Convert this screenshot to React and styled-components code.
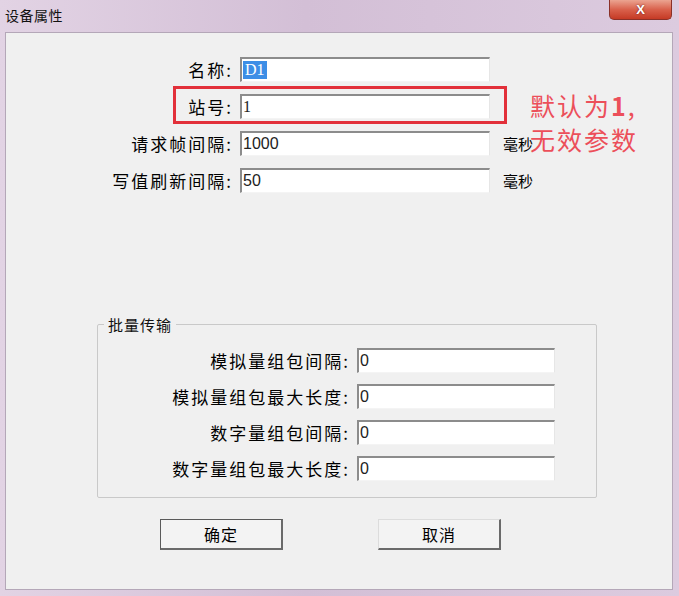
import React from "react";
import styled, { createGlobalStyle } from "styled-components";

const Global = createGlobalStyle`
  html, body { margin: 0; padding: 0; }
  body {
    width: 679px;
    height: 596px;
    overflow: hidden;
    font-family: "Noto Sans CJK SC", "Liberation Sans", sans-serif;
  }
`;

const Frame = styled.div`
  width: 679px;
  height: 596px;
  box-sizing: border-box;
  display: flex;
  flex-direction: column;
  background: linear-gradient(90deg, #e2d3e4 0%, #d3bfd6 45%, #dccbdf 100%);
  padding: 0 6px 6px 5px;
`;

const TitleBar = styled.div`
  height: 32px;
  display: flex;
  align-items: flex-start;
  justify-content: space-between;
  flex-shrink: 0;
`;

const Title = styled.div`
  font-size: 14px;
  color: #111;
  padding-top: 5px;
  letter-spacing: 0.5px;
`;

const CloseBtn = styled.div`
  width: 63px;
  height: 20px;
  margin-right: 1px;
  box-sizing: border-box;
  border: 1px solid #8a3128;
  border-top: none;
  border-radius: 0 0 5px 5px;
  background: linear-gradient(#eba491 0%, #d9614c 50%, #c53a25 100%);
  color: #fff;
  display: flex;
  align-items: center;
  justify-content: center;
  font: bold 13px "Liberation Sans", sans-serif;
  text-shadow: 0 0 2px #6a1a10;
`;

const Client = styled.div`
  flex: 1;
  position: relative;
  background: #f0f0f0;
  border: 1px solid #b4a7b8;
  box-sizing: border-box;
  padding-top: 24px;
  display: flex;
  flex-direction: column;
`;

const FormGrid = styled.div`
  display: grid;
  grid-template-columns: ${(p) => p.$label}px ${(p) => p.$input}px auto;
  column-gap: 7px;
  row-gap: ${(p) => p.$gap}px;
  align-items: center;
`;

const Label = styled.div`
  text-align: right;
  font-size: 17px;
  color: #000;
  letter-spacing: 2px;
  white-space: nowrap;
`;

const Input = styled.div`
  height: ${(p) => p.$h}px;
  box-sizing: border-box;
  background: #fff;
  border-top: 2px solid #8c8c8c;
  border-left: 2px solid #8c8c8c;
  border-right: 1px solid #e6e6e6;
  border-bottom: 1px solid #f4f4f4;
  display: flex;
  align-items: center;
  padding-left: 1px;
  font: 16px "Liberation Sans", sans-serif;
  color: #222;
`;

const Selected = styled.span`
  background: #3d8ee6;
  color: #fff;
  font-family: "Liberation Serif", serif;
  padding: 0 2px;
`;

const Serif = styled.span`
  font-family: "Liberation Serif", serif;
`;

const Unit = styled.div`
  font-size: 15px;
  color: #000;
  margin-left: 6px;
`;

const RedBox = styled.div`
  position: absolute;
  left: 167px;
  top: 53px;
  width: 334px;
  height: 38px;
  box-sizing: border-box;
  border: 3px solid #e2303a;
`;

const Note = styled.div`
  position: absolute;
  left: 524px;
  top: 55px;
  font-size: 25px;
  line-height: 34px;
  color: #ec4f5a;
  letter-spacing: 2px;
  b { font-weight: 700; }
`;

const Group = styled.fieldset`
  margin: 121px 0 0 91px;
  width: 500px;
  height: 184px;
  box-sizing: border-box;
  border: 1px solid #c9c9c9;
  border-radius: 2px;
  padding: 13px 0 0 0;
  min-width: 0;
`;

const Legend = styled.legend`
  font-size: 15px;
  color: #111;
  padding: 0 4px;
  margin-left: 6px;
  letter-spacing: 1px;
`;

const ButtonRow = styled.div`
  display: flex;
  gap: 95px;
  margin: 21px 0 0 154px;
`;

const Button = styled.div`
  width: 123px;
  height: 31px;
  box-sizing: border-box;
  display: flex;
  align-items: center;
  justify-content: center;
  font-size: 16px;
  color: #000;
  background: #f3f3f3;
  letter-spacing: 1px;
  border: 1px solid ${(p) => (p.$primary ? "#5a5a5a" : "#dcdcdc")};
  border-right: 2px solid #6a6a6a;
  border-bottom: 2px solid #6a6a6a;
`;

const topRows = [
  { label: "名称:", value: <Selected>D1</Selected> },
  { label: "站号:", value: <Serif>1</Serif> },
  { label: "请求帧间隔:", value: "1000", unit: "毫秒" },
  { label: "写值刷新间隔:", value: "50", unit: "毫秒" },
];

const batchRows = ["模拟量组包间隔:", "模拟量组包最大长度:", "数字量组包间隔:", "数字量组包最大长度:"];

export default function App() {
  return (
    <>
      <Global />
      <Frame>
        <TitleBar>
          <Title>设备属性</Title>
          <CloseBtn>X</CloseBtn>
        </TitleBar>
        <Client>
          <FormGrid $label={227} $input={250} $gap={12}>
            {topRows.map((r) => (
              <React.Fragment key={r.label}>
                <Label>{r.label}</Label>
                <Input $h={25}>{r.value}</Input>
                <Unit>{r.unit || ""}</Unit>
              </React.Fragment>
            ))}
          </FormGrid>
          <RedBox />
          <Note>
            默认为<b>1</b>,
            <br />
            无效参数
          </Note>
          <Group>
            <Legend>批量传输</Legend>
            <FormGrid $label={252} $input={198} $gap={11}>
              {batchRows.map((l) => (
                <React.Fragment key={l}>
                  <Label>{l}</Label>
                  <Input $h={25}>0</Input>
                  <span />
                </React.Fragment>
              ))}
            </FormGrid>
          </Group>
          <ButtonRow>
            <Button $primary>确定</Button>
            <Button>取消</Button>
          </ButtonRow>
        </Client>
      </Frame>
    </>
  );
}
